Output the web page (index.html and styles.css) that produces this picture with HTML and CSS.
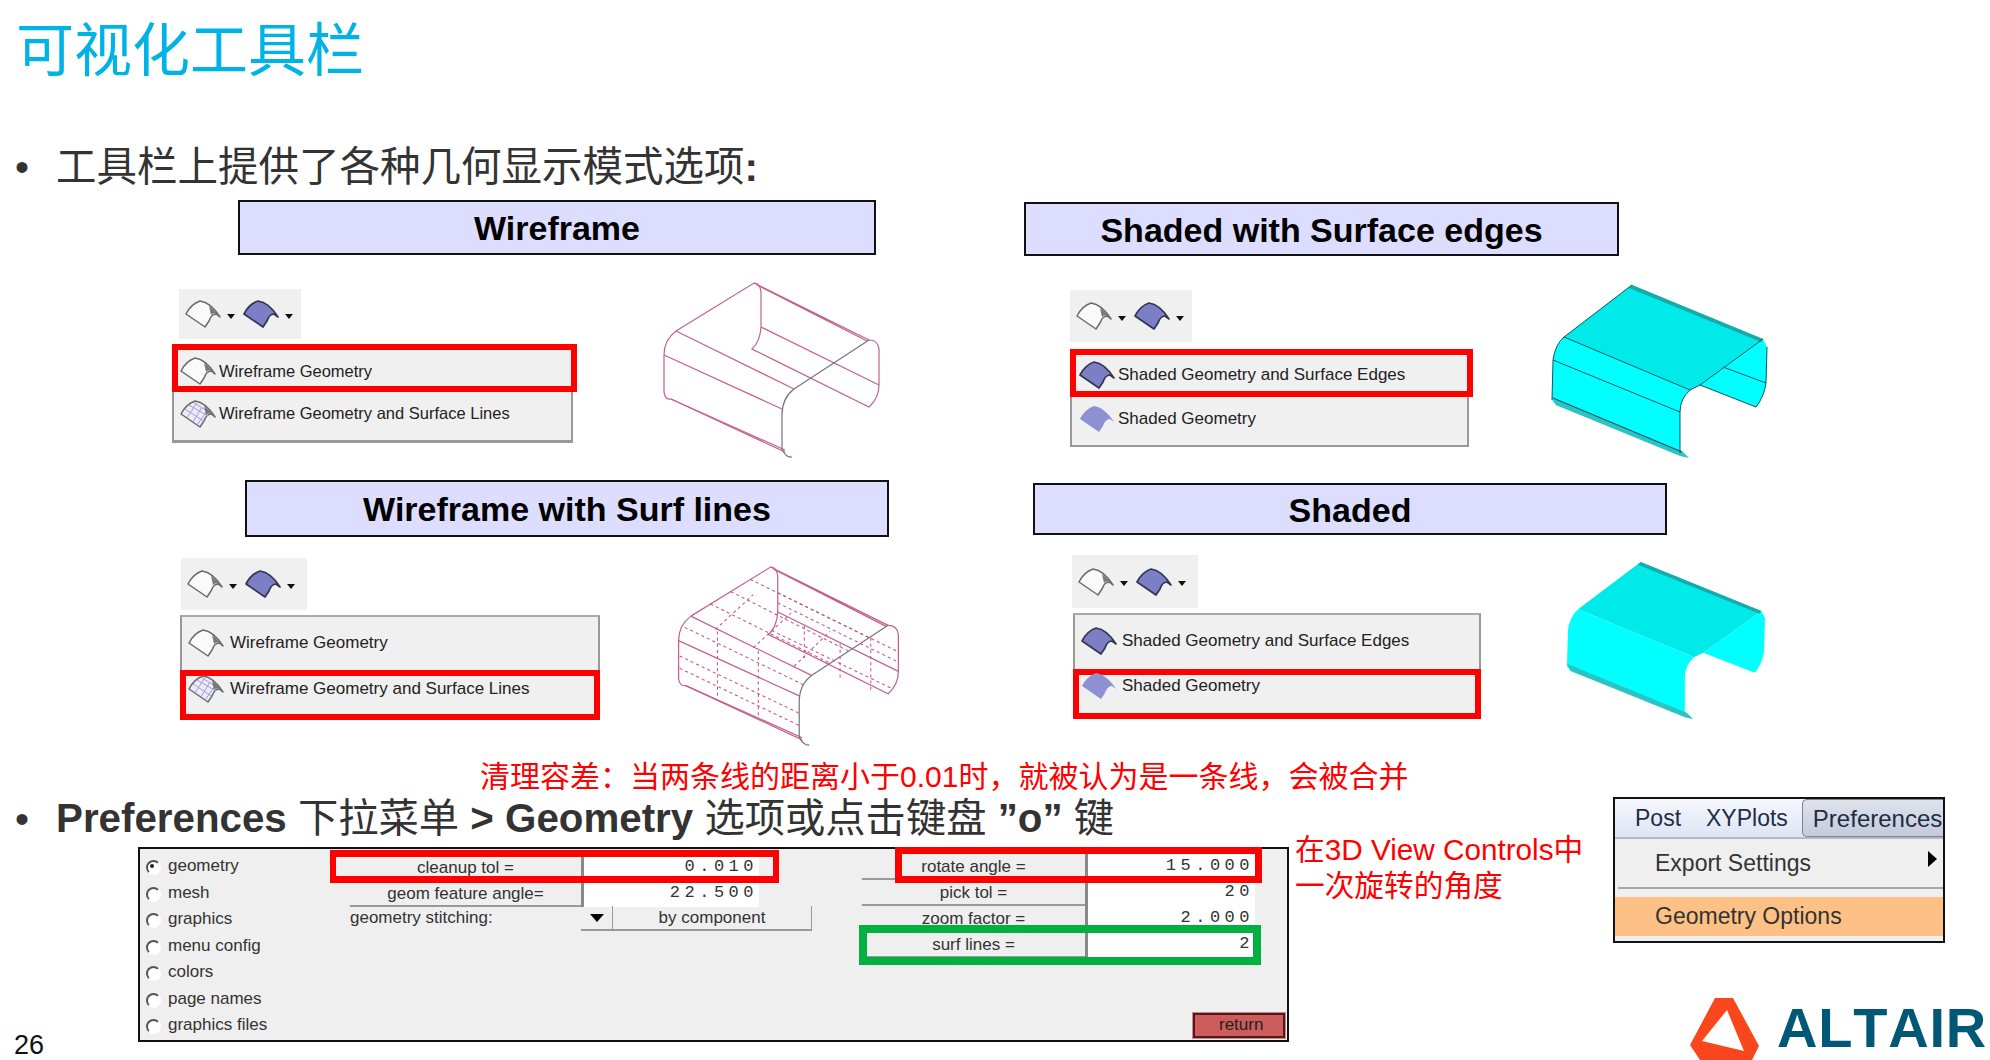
FILE: index.html
```html
<!DOCTYPE html>
<html lang="zh-CN">
<head>
    <meta charset="UTF-8">
    <title>可视化工具栏</title>
    <link rel="stylesheet" href="styles.css">
</head>
<body>
<!-- shared icons -->
<svg class="sprite" aria-hidden="true">
    <symbol id="ico-wire" viewBox="0 0 36 28">
        <path d="M1 14 C4 8 9 3 15 1 C23 2 30 9 35 17 L31 14 C27 14 25 18 24 21 L20 27 Z" fill="#fafafa" stroke="#6a6a6a" stroke-width="1.5" stroke-linejoin="round"/>
        <path d="M24 6 C28 9 32 13 35 17 L31 14 C28 13 27 14 26 15" fill="#777"/>
    </symbol>
    <symbol id="ico-grid" viewBox="0 0 36 28">
        <path d="M1 14 C4 8 9 3 15 1 C23 2 30 9 35 17 L31 14 C27 14 25 18 24 21 L20 27 Z" fill="#ecebf7" stroke="#6a6a6a" stroke-width="1.5" stroke-linejoin="round"/>
        <path d="M5 9 L25 22 M9 5 L28 16 M13 2 L30 13 M7 18 L16 4 M13 22 L22 7 M17 25 L27 11" fill="none" stroke="#9d9dd8" stroke-width="1"/>
        <path d="M24 6 C28 9 32 13 35 17 L31 14 C28 13 27 14 26 15" fill="#777"/>
    </symbol>
    <symbol id="ico-edge" viewBox="0 0 36 28">
        <path d="M1 14 C4 8 9 3 15 1 C23 2 30 9 35 17 L31 14 C27 14 25 18 24 21 L20 27 Z" fill="#7c7ec6" stroke="#33364f" stroke-width="1.7" stroke-linejoin="round"/>
    </symbol>
    <symbol id="ico-shade" viewBox="0 0 36 28">
        <path d="M1 14 C4 8 9 3 15 1 C23 2 30 9 35 17 L31 14 C27 14 25 18 24 21 L20 27 Z" fill="#8e90d4"/>
    </symbol>

    <symbol id="mdl-wire" viewBox="0 0 220 180" overflow="visible">
        <g fill="none" stroke="#c4608f" stroke-width="1.2">
            <path d="M14 51 L92 3 Q98 3 99 12 L99 47 Q98 62 90 69 L207 127 Q217 118 217 105 L217 69 Q216 60 207 60"/>
            <path d="M14 51 Q2 60 2 75 L2 112 Q3 120 9 119 L123 170"/>
            <path d="M92 3 L207 60 M95 5 L205 61 M9 119 L123 172"/>
            <path d="M14 51 L132 109 M2 75 L120 129 M99 47 L217 105"/>
        </g>
        <path d="M207 60 L132 109 Q120 118 120 135 L120 169 Q124 178 130 177" fill="none" stroke="#777" stroke-width="1.2"/>
    </symbol>
    <symbol id="mdl-lines" viewBox="0 0 220 180" overflow="visible">
        <g fill="none" stroke="#c4507f" stroke-width="1" stroke-dasharray="3 3">
            <path d="M33 39 L150 97 M53 27 L168 85 M72 15 L188 72 M8 62 L126 119 M3 90 L120 146 M3 102 L120 158"/>
            <path d="M99 28 L217 86 M99 38 L217 96 M93 65 L211 122"/>
            <path d="M38 64 L75 30 M75 82 L112 48 M115 100 L150 66 M40 66 L40 132 M80 85 L80 150"/>
            <path d="M125 60 L125 92 M160 78 L160 112 M190 72 L190 125"/>
        </g>
    </symbol>
    <symbol id="mdl-solid" viewBox="0 0 215 173" preserveAspectRatio="none">
        <path d="M211 54 L215 62 L214 98 Q212 112 204 122 L148 100 Z" fill="#00ffff"/>
        <path d="M80 0 L211 54 L148 100 L138 105 L12 52 Z" fill="#00eaea"/>
        <path d="M12 52 L138 105 Q128 114 128 127 L128 168 L137 173 L4 120 L0 115 L1 75 Q3 60 12 52 Z" fill="#00ffff"/>
        <path d="M80 0 L211 54 L209 57 L77 3 Z" fill="#1aa9a9"/>
        <path d="M0 112 L130 166 L137 173 L128 171 L4 120 Z" fill="#2ac4c4"/>
    </symbol>
</svg>

<div class="slide">
    <h1 class="title">可视化工具栏</h1>
    <p class="bullet bullet-top"><span>工具栏上提供了各种几何显示模式选项<b>:</b></span></p>

    <!-- Wireframe -->
    <section class="mode mode-wire">
        <h2 class="mode-head">Wireframe</h2>
        <div class="mode-body">
            <div class="mode-left">
                <div class="toolbar">
                    <svg class="tool-ico"><use href="#ico-wire"/></svg><i class="caret"></i>
                    <svg class="tool-ico"><use href="#ico-edge"/></svg><i class="caret"></i>
                </div>
                <div class="menu">
                    <div class="menu-item hl"><svg class="item-ico"><use href="#ico-wire"/></svg>Wireframe Geometry</div>
                    <div class="menu-item plain"><svg class="item-ico"><use href="#ico-grid"/></svg>Wireframe Geometry and Surface Lines</div>
                </div>
            </div>
            <svg class="model"><use href="#mdl-wire"/></svg>
        </div>
    </section>

    <!-- Shaded with edges -->
    <section class="mode mode-edges">
        <h2 class="mode-head">Shaded with Surface edges</h2>
        <div class="mode-body">
            <div class="mode-left">
                <div class="toolbar">
                    <svg class="tool-ico"><use href="#ico-wire"/></svg><i class="caret"></i>
                    <svg class="tool-ico"><use href="#ico-edge"/></svg><i class="caret"></i>
                </div>
                <div class="menu">
                    <div class="menu-item hl"><svg class="item-ico"><use href="#ico-edge"/></svg>Shaded Geometry and Surface Edges</div>
                    <div class="menu-item plain"><svg class="item-ico"><use href="#ico-shade"/></svg>Shaded Geometry</div>
                </div>
            </div>
            <svg class="model" viewBox="0 0 215 173">
                <use href="#mdl-solid"/>
                <path d="M12 52 L138 105 M1 75 L128 127 M1 113 L130 167 M171 82 L214 98 M80 0 L12 52 Q3 60 1 75 L0 115 M128 168 L128 127 Q128 114 138 105 L148 100 L211 54 M148 100 L204 122 Q212 112 214 98 L215 62" fill="none" stroke="#0d5560" stroke-width="1"/>
            </svg>
        </div>
    </section>

    <!-- Wireframe with surf lines -->
    <section class="mode mode-lines">
        <h2 class="mode-head">Wireframe with Surf lines</h2>
        <div class="mode-body">
            <div class="mode-left">
                <div class="toolbar">
                    <svg class="tool-ico"><use href="#ico-wire"/></svg><i class="caret"></i>
                    <svg class="tool-ico"><use href="#ico-edge"/></svg><i class="caret"></i>
                </div>
                <div class="menu">
                    <div class="menu-item plain"><svg class="item-ico"><use href="#ico-wire"/></svg>Wireframe Geometry</div>
                    <div class="menu-item hl"><svg class="item-ico"><use href="#ico-grid"/></svg>Wireframe Geometry and Surface Lines</div>
                </div>
            </div>
            <svg class="model" viewBox="0 0 220 180">
                <use href="#mdl-wire"/>
                <use href="#mdl-lines"/>
            </svg>
        </div>
    </section>

    <!-- Shaded -->
    <section class="mode mode-shaded">
        <h2 class="mode-head">Shaded</h2>
        <div class="mode-body">
            <div class="mode-left">
                <div class="toolbar">
                    <svg class="tool-ico"><use href="#ico-wire"/></svg><i class="caret"></i>
                    <svg class="tool-ico"><use href="#ico-edge"/></svg><i class="caret"></i>
                </div>
                <div class="menu">
                    <div class="menu-item plain"><svg class="item-ico"><use href="#ico-edge"/></svg>Shaded Geometry and Surface Edges</div>
                    <div class="menu-item hl"><svg class="item-ico"><use href="#ico-shade"/></svg>Shaded Geometry</div>
                </div>
            </div>
            <svg class="model" viewBox="0 0 215 173" preserveAspectRatio="none"><use href="#mdl-solid"/></svg>
        </div>
    </section>

    <p class="note note-tol">清理容差&#xFF1A;当两条线的距离小于0.01时&#xFF0C;就被认为是一条线&#xFF0C;会被合并</p>
    <p class="bullet bullet-pref"><span><b>Preferences</b> 下拉菜单 <b>&gt;</b> <b>Geometry</b> 选项或点击键盘 <b>”o”</b> 键</span></p>
    <p class="note note-rot">在3D View Controls中<br>一次旋转的角度</p>

    <!-- Geometry options panel -->
    <div class="panel">
        <ul class="radios">
            <li class="on">geometry</li>
            <li>mesh</li>
            <li>graphics</li>
            <li>menu config</li>
            <li>colors</li>
            <li>page names</li>
            <li>graphics files</li>
        </ul>
        <div class="fields fields-mid">
            <div class="field"><span class="field-btn">cleanup tol =</span><span class="field-val">0.010</span></div>
            <div class="field"><span class="field-btn">geom feature angle=</span><span class="field-val">22.500</span></div>
            <div class="stitch">
                <span class="stitch-label">geometry stitching:</span>
                <span class="stitch-arrow"><i></i></span>
                <span class="stitch-btn">by component</span>
            </div>
        </div>
        <div class="fields fields-right">
            <div class="field"><span class="field-btn">rotate angle =</span><span class="field-val">15.000</span></div>
            <div class="field"><span class="field-btn">pick tol =</span><span class="field-val">20</span></div>
            <div class="field"><span class="field-btn">zoom factor =</span><span class="field-val">2.000</span></div>
            <div class="field"><span class="field-btn">surf lines =</span><span class="field-val">2</span></div>
            <span class="return-btn">return</span>
        </div>
        <div class="frame frame-tol"></div>
        <div class="frame frame-rot"></div>
        <div class="frame frame-surf"></div>
    </div>

    <!-- Preferences menu -->
    <div class="pref-menu">
        <div class="pref-bar">
            <span>Post</span>
            <span>XYPlots</span>
            <span class="pref-tab">Preferences</span>
        </div>
        <div class="pref-row">Export Settings<i class="pref-arrow"></i></div>
        <div class="pref-sep"></div>
        <div class="pref-row pref-active">Geometry Options</div>
    </div>

    <span class="page-num">26</span>

    <div class="logo">
        <svg class="logo-mark" viewBox="0 0 69 62">
            <path fill-rule="evenodd" d="M25 0 L43 0 L69 48 L62 62 L10 62 L0 47 Z M37 12 L12 43 L54 53 Z" fill="#f9461c"/>
        </svg>
        <span class="logo-text">ALTAIR</span>
    </div>
</div>
</body>
</html>
```

FILE: styles.css
```css
* {
    margin: 0;
    padding: 0;
    box-sizing: border-box;
}

body {
    font-family: "Liberation Sans", "Noto Sans CJK SC", sans-serif;
    background-color: #fff;
    color: #333;
    overflow: hidden;
}

.sprite {
    position: absolute;
    width: 0;
    height: 0;
}

/* the slide is a free canvas, its blocks sit where the author dropped them */
.slide {
    position: relative;
    width: 1990px;
    height: 1060px;
    overflow: hidden;
}

.title {
    position: absolute;
    left: 16px;
    top: 17px;
    font-size: 58px;
    line-height: 68px;
    font-weight: 400;
    color: #00b3e6;
}

.bullet {
    position: absolute;
    left: 15px;
    display: flex;
    line-height: 48px;
    white-space: nowrap;
}

.bullet::before {
    content: "•";
    width: 41px;
    flex: none;
    font-size: 40px;
}

.bullet-top {
    top: 143px;
    font-size: 40.5px;
}

.bullet-pref {
    top: 795px;
    font-size: 40.3px;
}

.note {
    position: absolute;
    color: #f00;
    white-space: nowrap;
}

.note-tol {
    left: 480px;
    top: 757px;
    font-size: 30px;
    line-height: 40px;
}

.note-rot {
    left: 1295px;
    top: 832px;
    font-size: 29.7px;
    line-height: 36px;
}

/* display mode blocks */
.mode {
    position: absolute;
}

.mode-head {
    display: flex;
    align-items: center;
    justify-content: center;
    background-color: #ddf;
    border: 2px solid #111;
    font-size: 34px;
    color: #000;
    padding-top: 2px;
}

.mode-body {
    display: flex;
    align-items: flex-start;
}

.toolbar {
    display: flex;
    align-items: center;
    width: 122px;
    background-color: #f0f0f0;
    padding-left: 6px;
}

.tool-ico {
    width: 36px;
    height: 28px;
}

.caret {
    width: 0;
    height: 0;
    margin: 4px 8px 0 6px;
    border-left: 4px solid transparent;
    border-right: 4px solid transparent;
    border-top: 5px solid #111;
}

.menu-item {
    display: flex;
    align-items: center;
    font-size: 17px;
    color: #222;
    background-color: #f0f0f0;
    white-space: nowrap;
}

.item-ico {
    width: 36px;
    height: 28px;
    flex: none;
    margin-right: 3px;
}

.menu-item.hl {
    border: 6px solid #f00;
}

.menu-item.plain {
    border-left: 2px solid #999;
    border-right: 2px solid #999;
}

.model {
    display: block;
    flex: none;
    overflow: visible;
}

.mode-wire {
    left: 172px;
    top: 200px;
}

.mode-wire .mode-head {
    width: 638px;
    height: 55px;
    margin-left: 66px;
}

.mode-wire .mode-body {
    margin-top: 25px;
}

.mode-wire .mode-left {
    padding-top: 9px;
}

.mode-wire .toolbar {
    height: 50px;
    margin-left: 7px;
    margin-bottom: 5px;
}

.mode-wire .menu {
    width: 405px;
}

.mode-wire .menu-item {
    font-size: 16.5px;
}

.mode-wire .hl {
    height: 48px;
    padding: 6px 0 0 2px;
}

.mode-wire .plain {
    width: 401px;
    height: 51px;
    padding: 0 0 5px 6px;
    border-bottom: 3px solid #999;
}

.mode-wire .model {
    width: 220px;
    height: 180px;
    margin-left: 85px;
}

.mode-edges {
    left: 1024px;
    top: 202px;
}

.mode-edges .mode-head {
    width: 595px;
    height: 54px;
}

.mode-edges .mode-body {
    margin-top: 29px;
}

.mode-edges .mode-left {
    margin-left: 46px;
    padding-top: 5px;
}

.mode-edges .toolbar {
    height: 52px;
    margin-bottom: 7px;
}

.mode-edges .menu {
    width: 403px;
}

.mode-edges .hl {
    height: 48px;
    padding: 4px 0 0 3px;
}

.mode-edges .plain {
    width: 399px;
    height: 50px;
    padding: 0 0 5px 7px;
    border-bottom: 2px solid #999;
}

.mode-edges .model {
    width: 215px;
    height: 173px;
    margin-left: 79px;
}

.mode-lines {
    left: 180px;
    top: 480px;
}

.mode-lines .mode-head {
    width: 644px;
    height: 57px;
    margin-left: 65px;
}

.mode-lines .mode-body {
    margin-top: 21px;
}

.mode-lines .toolbar {
    width: 126px;
    height: 52px;
    margin-left: 1px;
    margin-bottom: 5px;
}

.mode-lines .menu {
    width: 420px;
}

.mode-lines .plain {
    height: 55px;
    padding: 0 0 2px 6px;
    border-top: 2px solid #aaa;
}

.mode-lines .hl {
    height: 50px;
    padding: 0 0 12px 2px;
}

.mode-lines .item-ico {
    margin-right: 6px;
}

.mode-lines .model {
    width: 226px;
    height: 184px;
    margin: 6px 0 0 76px;
}

.mode-shaded {
    left: 1033px;
    top: 483px;
}

.mode-shaded .mode-head {
    width: 634px;
    height: 52px;
}

.mode-shaded .mode-body {
    margin-top: 20px;
}

.mode-shaded .mode-left {
    margin-left: 39px;
}

.mode-shaded .toolbar {
    width: 126px;
    height: 53px;
    margin-bottom: 5px;
}

.mode-shaded .menu {
    width: 408px;
    margin-left: 1px;
}

.mode-shaded .plain {
    height: 56px;
    padding: 0 0 2px 6px;
    border-top: 2px solid #aaa;
}

.mode-shaded .hl {
    height: 50px;
    padding: 0 0 16px 2px;
}

.mode-shaded .item-ico {
    margin-right: 5px;
}

.mode-shaded .model {
    width: 198px;
    height: 157px;
    margin: 7px 0 0 86px;
}

/* geometry options panel */
.panel {
    position: absolute;
    left: 138px;
    top: 847px;
    width: 1151px;
    height: 195px;
    display: grid;
    grid-template-columns: 210px 512px 1fr;
    background-color: #efefef;
    border: 2px solid #111;
    font-size: 17px;
    color: #333;
}

.radios {
    list-style: none;
    padding: 4px 0 0 28px;
}

.radios li {
    position: relative;
    height: 26.5px;
    line-height: 26px;
}

.radios li::before {
    content: "";
    position: absolute;
    left: -22px;
    top: 7px;
    width: 11px;
    height: 11px;
    border-radius: 50%;
    background-color: #fff;
    border: 2px solid;
    border-color: #555 #fff #fff #555;
}

.radios li.on::after {
    content: "";
    position: absolute;
    left: -18.5px;
    top: 10.5px;
    width: 4px;
    height: 4px;
    border-radius: 50%;
    background-color: #222;
}

.fields {
    display: flex;
    flex-direction: column;
}

.fields-mid {
    padding-top: 6px;
}

.fields-right {
    padding: 5px 2px 2px 0;
}

.field {
    display: flex;
    flex: none;
    height: 26px;
}

.field-btn {
    display: block;
    text-align: center;
    line-height: 25px;
    border-bottom: 2px solid #999;
    white-space: nowrap;
}

.field-val {
    display: block;
    background-color: #fff;
    border-left: 3px solid #888;
    text-align: right;
    font-family: "Liberation Mono", monospace;
    font-size: 17px;
    letter-spacing: 4.5px;
    line-height: 24px;
    padding-right: 1px;
}

.fields-mid .field-btn {
    width: 231px;
}

.fields-mid .field-val {
    width: 178px;
}

.fields-right .field-btn {
    width: 223px;
}

.fields-right .field-val {
    width: 170px;
}

.stitch {
    display: flex;
    height: 25px;
    margin-top: -1px;
    line-height: 24px;
}

.stitch-label {
    width: 231px;
}

.stitch-arrow {
    display: flex;
    align-items: center;
    justify-content: center;
    width: 32px;
    border-bottom: 2px solid #999;
    border-right: 1px solid #999;
}

.stitch-arrow i {
    border-left: 7px solid transparent;
    border-right: 7px solid transparent;
    border-top: 8px solid #000;
}

.stitch-btn {
    width: 199px;
    text-align: center;
    border-bottom: 2px solid #999;
    border-right: 1px solid #999;
}

.return-btn {
    margin-top: auto;
    align-self: flex-end;
    width: 92px;
    height: 25px;
    padding-left: 24px;
    line-height: 20px;
    background-color: #cd5c5c;
    border: 2px solid #4a1c1c;
    outline: 1px solid #d98080;
    color: #222;
}

/* frames drawn on top of the screenshot */
.frame {
    position: absolute;
}

.frame-tol {
    left: 190px;
    top: 1px;
    width: 449px;
    height: 33px;
    border: 7px solid #f00;
    border-left-width: 6px;
    border-right-width: 6px;
}

.frame-rot {
    left: 755px;
    top: -2px;
    width: 367px;
    height: 36px;
    border: 7px solid #f00;
}

.frame-surf {
    left: 719px;
    top: 76px;
    width: 402px;
    height: 40px;
    border: 8px solid #00b140;
}

.pref-menu {
    position: absolute;
    left: 1613px;
    top: 797px;
    width: 332px;
    height: 146px;
    background-color: #efefef;
    border: 2px solid #111;
    color: #333;
    font-size: 23px;
}

.pref-bar {
    display: flex;
    align-items: center;
    height: 40px;
    padding-left: 20px;
    gap: 25px;
    background: linear-gradient(#f6f8fd, #dde4f4);
    border-bottom: 2px solid #b5b8c0;
    color: #1f2c44;
}

.pref-tab {
    align-self: stretch;
    margin-left: -11px;
    padding: 5px 0 0 10px;
    flex: 1;
    font-size: 24px;
    background: linear-gradient(#dfe3ec, #c3cadb);
    border: 1px solid #7c828f;
    border-right: none;
    border-radius: 5px 0 0 5px;
    white-space: nowrap;
}

.pref-row {
    display: flex;
    align-items: center;
    justify-content: space-between;
    height: 48px;
    padding: 0 6px 0 40px;
}

.pref-arrow {
    margin-bottom: 8px;
    border-top: 8px solid transparent;
    border-bottom: 8px solid transparent;
    border-left: 9px solid #000;
}

.pref-sep {
    height: 2px;
    margin: 0 0 0 3px;
    background-color: #aaa;
}

.pref-active {
    height: 39px;
    margin-top: 8px;
    background-color: #fdc185;
}

.page-num {
    position: absolute;
    left: 14px;
    top: 1030px;
    font-size: 27px;
    line-height: 30px;
    color: #111;
}

.logo {
    position: absolute;
    left: 1690px;
    top: 998px;
    display: flex;
    align-items: flex-start;
    gap: 18px;
}

.logo-mark {
    flex: none;
    width: 69px;
    height: 62px;
}

.logo-text {
    font-size: 56px;
    font-weight: 700;
    line-height: 58px;
    margin-top: 0.5px;
    letter-spacing: 0.8px;
    font-kerning: none;
    color: #005776;
}
```
